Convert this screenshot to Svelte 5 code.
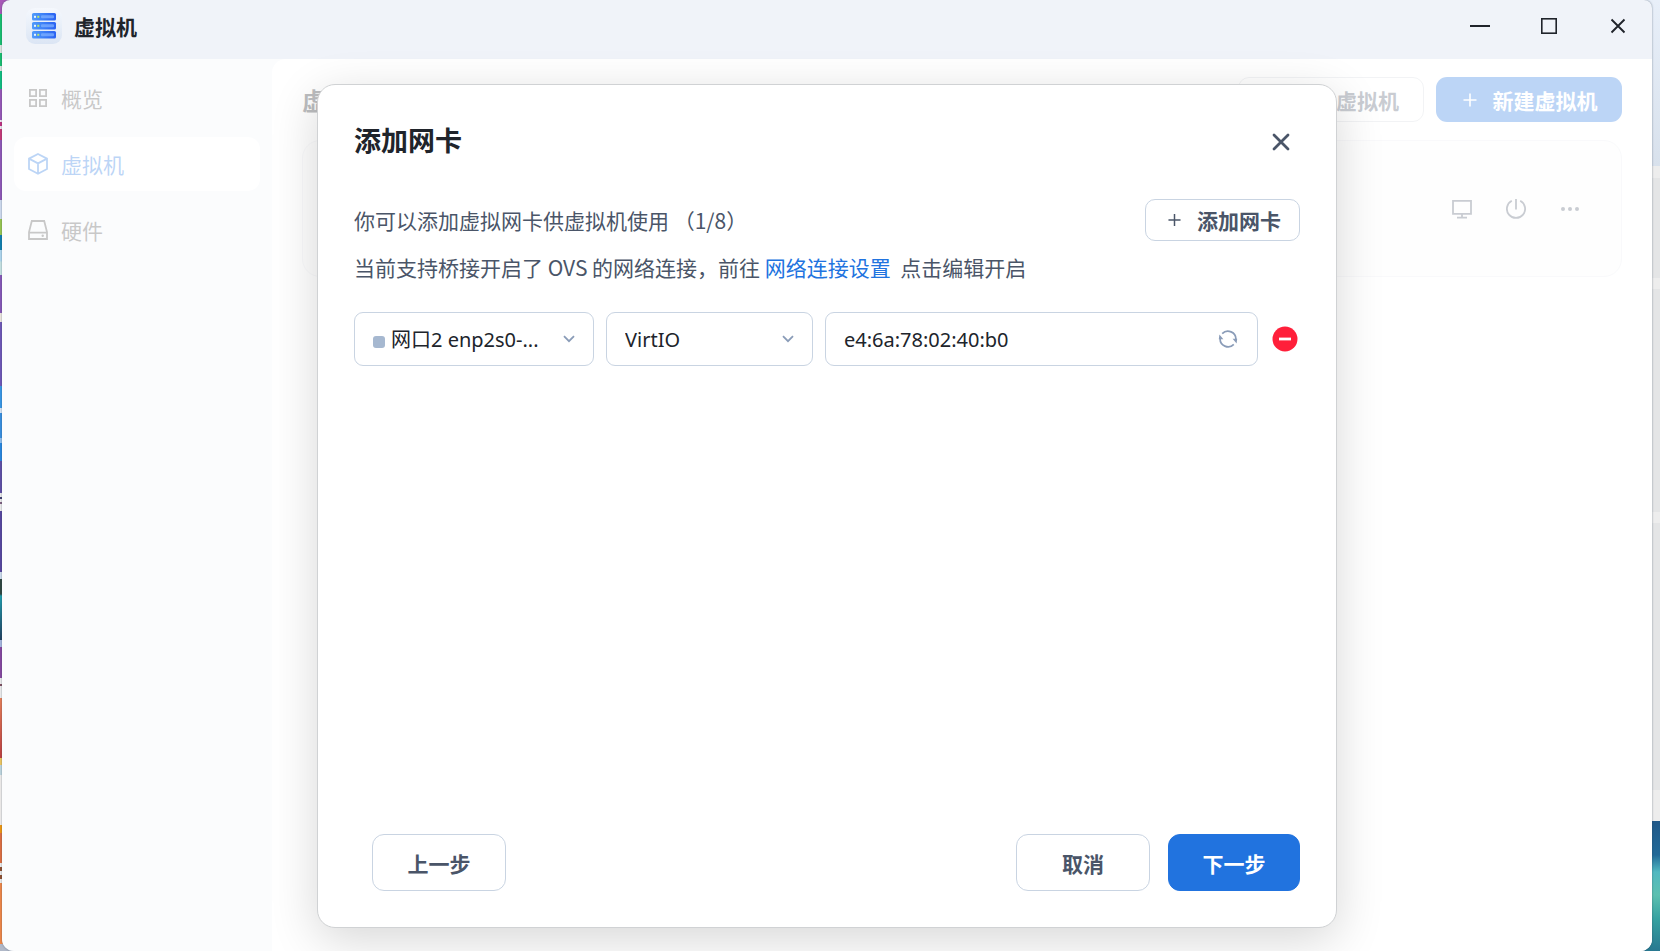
<script>
  let port = $state('enp2s0');
  let model = $state('virtio');
  let mac = $state('e4:6a:78:02:40:b0');
</script>

<div class="desktop">
  <div class="wallpaper" aria-hidden="true"></div>
  <div class="window">
    <header class="titlebar">
      <svg class="logo" width="36" height="36" viewBox="0 0 36 36" aria-hidden="true">
        <defs>
          <linearGradient id="tile" x1="0" y1="0" x2="0" y2="1">
            <stop offset="0" stop-color="#f5f8fd" />
            <stop offset="1" stop-color="#dbe5f4" />
          </linearGradient>
          <linearGradient id="bar" x1="0" y1="0" x2="1" y2="0">
            <stop offset="0" stop-color="#4f9bfb" />
            <stop offset="1" stop-color="#2a62f2" />
          </linearGradient>
        </defs>
        <rect width="36" height="36" rx="9" fill="url(#tile)" />
        {#each [5, 14, 23] as y}
          <rect x="6" {y} width="24" height="7.5" rx="1.6" fill="url(#bar)" />
          <rect x="15" y={y + 2.3} width="13" height="3" rx="1" fill="#7fb0ff" opacity=".75" />
          <rect x="8" y={y + 2.8} width="2" height="2" fill="#e8f4ff" />
          <rect x="11.3" y={y + 2.8} width="2" height="2" fill="#b9ea6a" />
        {/each}
      </svg>
      <h1>虚拟机</h1>
      <div class="controls">
        <button aria-label="最小化"><svg width="20" height="20" viewBox="0 0 20 20"><path d="M0 10h20" stroke-width="2" /></svg></button>
        <button aria-label="最大化"><svg width="20" height="20" viewBox="0 0 20 20"><rect x="2.8" y="2.8" width="14.4" height="14.4" stroke-width="1.6" /></svg></button>
        <button aria-label="关闭窗口"><svg width="20" height="20" viewBox="0 0 20 20"><path d="M3.5 3.5l13 13M16.5 3.5l-13 13" stroke-width="1.9" /></svg></button>
      </div>
    </header>

    <div class="body">
      <nav>
        <a href="#overview">
          <svg width="20" height="20" viewBox="0 0 20 20"><path d="M1.9 1.9h6.2v6.2H1.9zM11.9 1.9h6.2v6.2h-6.2zM1.9 11.9h6.2v6.2H1.9zM11.9 11.9h6.2v6.2h-6.2z" /></svg>
          <span>概览</span>
        </a>
        <a href="#vm" class="active">
          <svg width="20" height="22" viewBox="0 0 20 22"><path d="M10 1l9 4.6v10.4l-9 4.8L1 16V5.600zM1 5.600l9 4.8 9-4.8M10 10.400v10.400" /></svg>
          <span>虚拟机</span>
        </a>
        <a href="#hardware">
          <svg width="20" height="20" viewBox="0 0 20 20"><path d="M3.8 1h12.400L19 12v7H1v-7zM1 12.600h18" /><circle cx="14.700" cy="15.800" r="1.2" fill="currentColor" stroke="none" /></svg>
          <span>硬件</span>
        </a>
      </nav>

      <main>
        <div class="toolbar">
          <h2>虚拟机</h2>
          <button class="outline">虚拟机</button>
          <button class="primary">
            <svg width="14" height="14" viewBox="0 0 14 14"><path d="M7 .5v13M.5 7h13" stroke-width="1.6" /></svg>
            新建虚拟机
          </button>
        </div>
        <section class="card">
          <button aria-label="显示器"><svg width="20" height="20" viewBox="0 0 20 20"><path d="M1 1.8h18v13H1zM10 15v3.5M5 18.600h10" /></svg></button>
          <button aria-label="电源"><svg width="20" height="20" viewBox="0 0 20 20"><path d="M10 0v10.500M5.800 1.800a9.100 9.100 0 1 0 8.400 0" /></svg></button>
          <button aria-label="更多"><svg width="20" height="20" viewBox="0 0 20 20" class="dots"><circle cx="3" cy="10" r="2" /><circle cx="10" cy="10" r="2" /><circle cx="17" cy="10" r="2" /></svg></button>
        </section>
      </main>

      <div class="overlay">
        <div class="modal" role="dialog" aria-modal="true" aria-labelledby="dialog-title">
          <div class="modal-head">
            <h2 id="dialog-title">添加网卡</h2>
            <button class="close" aria-label="关闭"><svg width="18" height="18" viewBox="0 0 18 18"><path d="M2 2l14 14M16 2L2 16" stroke-width="2.800" stroke-linecap="round" /></svg></button>
          </div>

          <div class="intro">
            <p>你可以添加虚拟网卡供虚拟机使用 （1/8）</p>
            <button class="add">
              <svg width="14" height="14" viewBox="0 0 14 14"><path d="M7 .5v13M.5 7h13" stroke-width="1.6" /></svg>
              添加网卡
            </button>
          </div>
          <p class="hint">当前支持桥接开启了 OVS 的网络连接，前往 <a href="#network">网络连接设置</a>&nbsp; 点击编辑开启</p>

          <div class="nic">
            <div class="field port">
              <i class="status"></i>
              <select aria-label="网口" bind:value={port}>
                <option value="enp2s0">网口2 enp2s0-...</option>
              </select>
              <svg class="chevron" width="12" height="8" viewBox="0 0 12 8"><path d="M1 1.2l5 5 5-5" stroke-width="1.8" /></svg>
            </div>
            <div class="field model">
              <select aria-label="型号" bind:value={model}>
                <option value="virtio">VirtIO</option>
              </select>
              <svg class="chevron" width="12" height="8" viewBox="0 0 12 8"><path d="M1 1.2l5 5 5-5" stroke-width="1.8" /></svg>
            </div>
            <div class="field mac">
              <input type="text" aria-label="MAC" bind:value={mac} />
              <button class="refresh" aria-label="刷新">
                <svg width="20" height="20" viewBox="0 0 20 20"><path d="M4.2 4.6A8 8 0 0 1 17.9 10.6M15.8 15.4A8 8 0 0 1 2.1 9.4" stroke-width="1.7" /><path d="M14.600 9.800h4.600l-.6 4.600zM5.400 10.200H.8l.6-4.600z" fill="currentColor" stroke="none" /></svg>
              </button>
            </div>
            <button class="remove" aria-label="删除">
              <svg width="26" height="26" viewBox="0 0 26 26"><circle cx="13" cy="13" r="12.5" fill="#ff1f3a" stroke="none" /><path d="M7 13h12" stroke="#fff" stroke-width="2.8" /></svg>
            </button>
          </div>

          <div class="actions">
            <button class="prev">上一步</button>
            <button>取消</button>
            <button class="next">下一步</button>
          </div>
        </div>
      </div>
    </div>
  </div>
</div>

<style>
  :global(body) { margin: 0; }

  .desktop, .desktop * { box-sizing: border-box; }

  .desktop {
    position: relative;
    min-height: 100vh;
    display: flex;
    padding: 0 8px 0 2px;
    font-family: "Noto Sans CJK SC", sans-serif;
    font-size: 21px;
    line-height: 30px;
    color: #20242b;
    background: linear-gradient(#e8eff9, #d8e1ec 166px, #ededed 166px 178px, #e4e5e6 178px 278px, #ededed 278px 289px, #e4e5e6 289px 512px, #ededed 512px 523px, #e4e5e6 523px 790px, #ededed 790px 821px, #205888 821px, #226a98 855px, #50b8c0 872px, #5cc0b0 895px, #35a0a0 920px, #287890 951px);
  }

  .wallpaper {
    position: absolute;
    inset: 0 auto 0 0;
    width: 14px;
    background: linear-gradient(#a858b8 14px, #18c070 14px 45px, #dfe8e0 45px 53px, #18c070 53px 66px, #dfe8e0 66px 71px, #10c080 71px 89px, #9858b8 89px 120px, #f0e8f0 120px 122px, #c03080 122px 126px, #f0e8f0 126px 129px, #c83878 129px 140px, #9058b8 140px 200px, #d0dcf0 200px 219px, #98c850 219px 235px, #1080b0 235px 250px, #b0d8f0 250px 261px, #c8e4e4 262px 275px, #8858b8 275px 313px, #eee8e0 313px 322px, #7058b8 322px 386px, #3898e8 386px 408px, #d8e8f8 408px 413px, #3890e0 413px 438px, #90c0f0 438px 443px, #2888e0 443px 461px, #6050a8 461px 493px, #eee 493px 497px, #404070 497px 499px, #eee 499px 502px, #806080 502px 504px, #eee 504px 511px, #5848a0 511px 572px, #d0dff0 572px 579px, #304840 579px 594px, #20a0b0 596px, #204060 640px, #a8b8e0 640px 647px, #8848a0 647px 678px, #eee 678px 684px, #805060 684px 686px, #eee 686px 698px, #e88058 698px, #c04040 758px, #f0c860 758px 765px, #c0d8e0 765px 775px, #f0eeec 775px 825px, #f09810 825px 833px, #e07040 833px 863px, #eee 863px 867px, #905030 867px 871px, #eee 871px 875px, #905030 875px 879px, #eee 879px 883px, #f08848 883px 944px, #b0b8c8 944px);
  }

  .window {
    position: relative;
    flex: 1;
    min-width: 0;
    display: flex;
    flex-direction: column;
    overflow: hidden;
    border-radius: 8px 8px 12px 12px;
    background: #f0f3f9;
    box-shadow: 0 0 2px rgba(40, 60, 80, .6);
  }

  h1, h2, p { margin: 0; }
  button, select, input { font: inherit; color: inherit; }
  button { display: inline-flex; align-items: center; justify-content: center; padding: 0; border: 0; background: none; cursor: pointer; }
  svg { flex: none; fill: none; stroke: currentColor; }
  a { text-decoration: none; }

  .titlebar { display: flex; align-items: center; gap: 12px; height: 59px; padding: 0 0 7px 24px; }
  .logo { stroke: none; }
  .titlebar h1 { font-size: 21px; font-weight: 700; }
  .controls { display: flex; margin-left: auto; }
  .controls button { width: 69px; height: 52px; }

  .body { position: relative; flex: 1; display: flex; }

  nav { width: 270px; padding: 12px; display: flex; flex-direction: column; gap: 12px; }
  nav a { display: flex; align-items: center; gap: 13px; height: 54px; padding: 0 14px; border-radius: 12px; color: #484848; }
  nav a.active { background: #fff; color: #2173df; }
  nav svg { stroke-width: 1.8; }

  main { flex: 1; min-width: 0; padding: 18px 30px; border-radius: 14px 0 0; background: #fff; }
  .toolbar { display: flex; align-items: center; gap: 12px; margin-bottom: 18px; }
  .toolbar h2 { margin-right: auto; font-size: 24px; font-weight: 700; }
  .toolbar button { height: 45px; min-width: 186px; padding: 1px 24px 0; border-radius: 11px; font-weight: 700; }
  .toolbar .outline { justify-content: flex-end; border: 1px solid #d4d8de; color: #4a5568; }
  .toolbar .primary { gap: 16px; padding-right: 22px; background: #2173df; color: #fff; }
  .card { display: flex; justify-content: flex-end; align-items: center; gap: 34px; height: 137px; padding: 0 41px 0 0; border: 1px solid #e9ebf0; border-radius: 18px; background: #fafafa; color: #4a5568; }
  .card svg { stroke-width: 1.8; }
  .card .dots { fill: currentColor; stroke: none; }

  .overlay { position: absolute; inset: 0; display: flex; justify-content: center; padding: 25px 20px 23px; background: rgba(255, 255, 255, .7); }
  .modal { display: flex; flex-direction: column; width: 1020px; padding: 36px; border: 1px solid #d0d2d4; border-radius: 18px; background: #fff; box-shadow: 0 12px 48px rgba(0, 0, 0, .16); color: #4a5568; }
  .modal-head { display: flex; align-items: center; justify-content: space-between; height: 42px; margin-bottom: 36px; }
  .modal-head h2 { padding-bottom: 4px; font-size: 27px; line-height: 38px; font-weight: 700; color: #20242b; }
  .close { width: 38px; height: 38px; }

  .intro { display: flex; align-items: center; justify-content: space-between; margin-bottom: 11px; }
  .add { gap: 16px; height: 42px; padding: 0 18px 0 22px; border: 1px solid #c9d4e2; border-radius: 10px; font-weight: 700; }
  .add svg { width: 13px; }
  .hint a { color: #2173df; }

  .nic { display: flex; align-items: center; gap: 12px; margin-top: 30px; color: #20242b; font-family: "Noto Sans", "Noto Sans CJK SC", sans-serif; }
  .field { position: relative; display: flex; align-items: center; height: 54px; border: 1px solid #c9d4e2; border-radius: 9px; }
  .port { flex: 0 0 240px; }
  .model { flex: 0 0 207px; }
  .mac { flex: 1; }
  .field select, .field input { width: 100%; height: 100%; padding: 0 18px; border: 0; outline: 0; background: none; appearance: none; font-size: 20px; }
  .field select { padding-top: 2px; }
  .port select { padding-left: 36px; padding-right: 40px; }
  .status { position: absolute; left: 18px; top: 23px; width: 12px; height: 12px; border-radius: 3px; background: #a6b8d0; }
  .chevron { position: absolute; right: 18px; color: #8a9cb8; pointer-events: none; }
  .refresh { width: 20px; height: 20px; margin-right: 19px; color: #8a9cb8; }
  .remove { width: 30px; height: 30px; }

  .actions { display: flex; gap: 18px; margin-top: auto; padding-left: 18px; }
  .actions button { width: 134px; height: 57px; border: 1px solid #c9d4e2; border-radius: 12px; font-weight: 700; }
  .actions .prev { margin-right: auto; }
  .actions .next { width: 132px; border-color: #2173df; background: #2173df; color: #fff; }
</style>
